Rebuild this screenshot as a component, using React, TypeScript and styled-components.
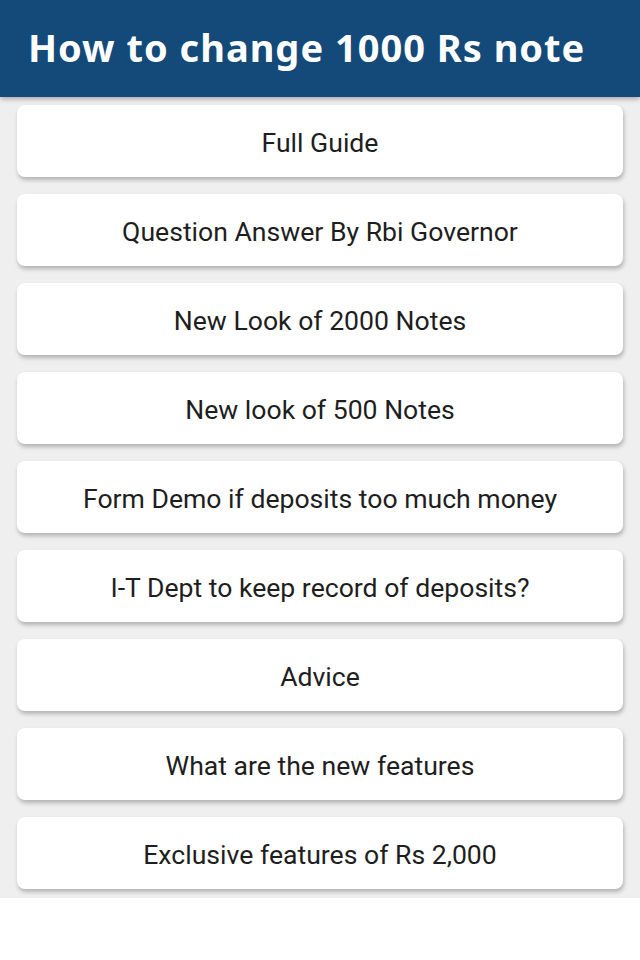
import styled, { createGlobalStyle } from "styled-components";

const items = [
  "Full Guide",
  "Question Answer By Rbi Governor",
  "New Look of 2000 Notes",
  "New look of 500 Notes",
  "Form Demo if deposits too much money",
  "I-T Dept to keep record of deposits?",
  "Advice",
  "What are the new features",
  "Exclusive features of Rs 2,000",
];

const GlobalStyle = createGlobalStyle`
  body {
    margin: 0;
    background: #ffffff;
    font-family: Roboto, "Noto Sans", sans-serif;
  }
`;

export default function App() {
  return (
    <>
      <GlobalStyle />
      <Page>
        <Header>
          <Title>How to change 1000 Rs note</Title>
        </Header>
        <List>
          {items.map((item) => (
            <Card key={item}>{item}</Card>
          ))}
        </List>
      </Page>
    </>
  );
}

const Page = styled.div`
  width: 640px;
  display: flex;
  flex-direction: column;
`;

const Header = styled.div`
  height: 97px;
  background-color: #134a7a;
  display: flex;
  align-items: center;
  padding-left: 28px;
  box-sizing: border-box;
  box-shadow: 0 2px 5px rgba(0, 0, 0, 0.3);
  position: relative;
  z-index: 1;
`;

const Title = styled.h1`
  margin: 0;
  margin-top: -4px;
  color: #ffffff;
  font-family: "Noto Sans", sans-serif;
  font-weight: 700;
  font-size: 38px;
  letter-spacing: 1px;
`;

const List = styled.div`
  background-color: #efefef;
  padding: 8px 17px 9px;
  display: flex;
  flex-direction: column;
  gap: 17px;
`;

const Card = styled.div`
  height: 72px;
  padding-top: 3px;
  box-sizing: border-box;
  background: #ffffff;
  border-radius: 8px;
  box-shadow: 1px 3px 4px rgba(0, 0, 0, 0.25);
  display: flex;
  align-items: center;
  justify-content: center;
  color: #1e1e1e;
  font-size: 26.6px;
  font-family: Roboto, sans-serif;
`;
